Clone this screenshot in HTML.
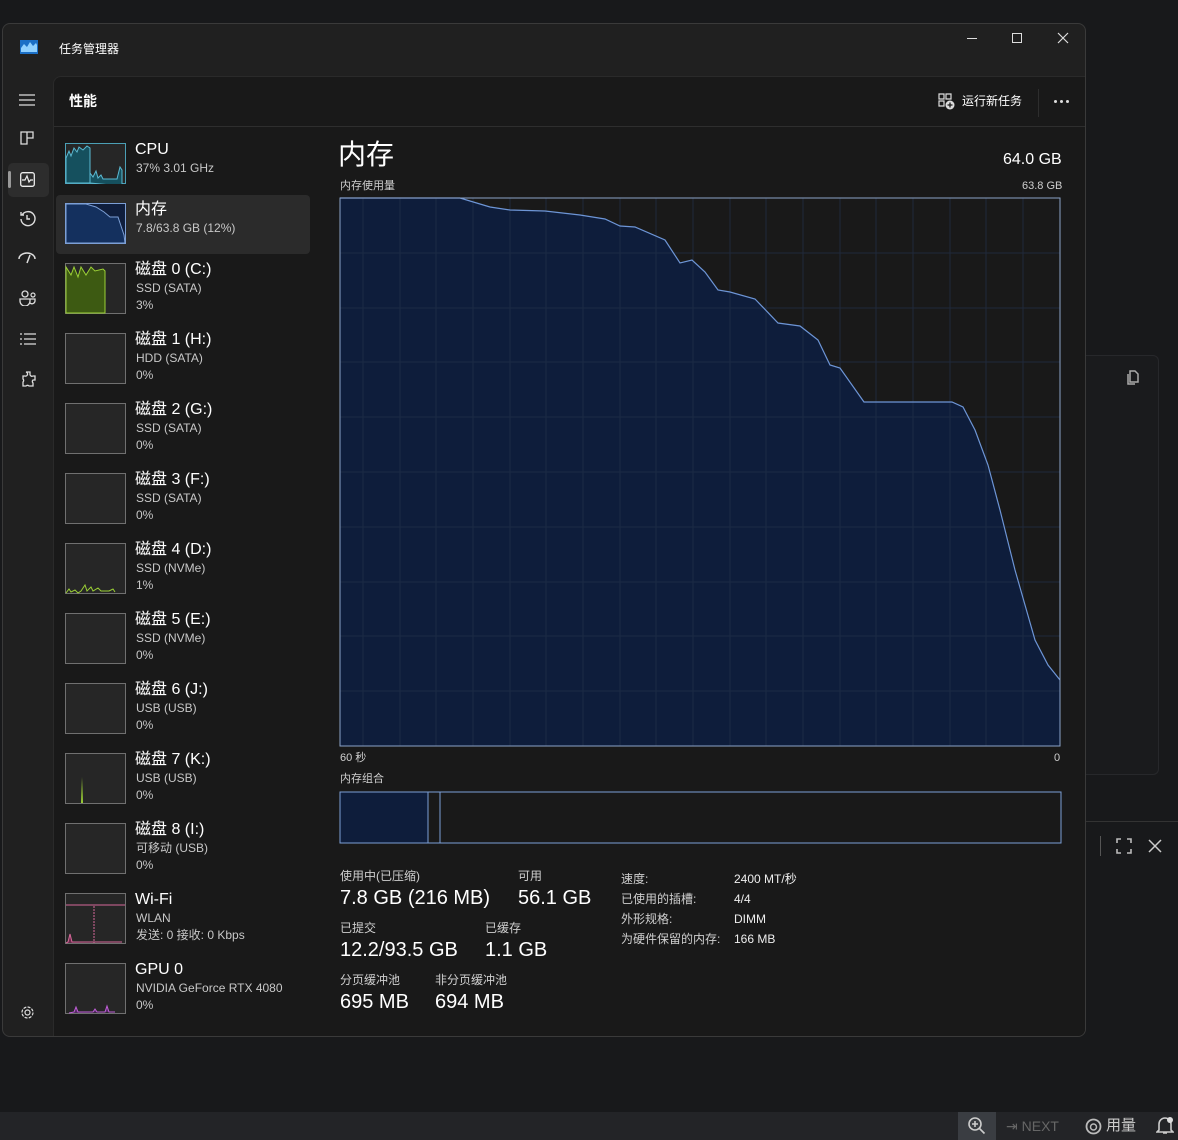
<!DOCTYPE html>
<html><head><meta charset="utf-8">
<style>
*{margin:0;padding:0;box-sizing:border-box}
body{width:1178px;height:1140px;background:#18191b;font-family:"Liberation Sans","Noto Sans CJK SC",sans-serif;color:#fff;position:relative;overflow:hidden}
.a{position:absolute}
.win{left:2px;top:23px;width:1084px;height:1014px;background:#202020;border:1px solid #3a3a3a;border-radius:8px;overflow:hidden}
.panel{left:50px;top:52px;width:1034px;height:962px;background:#191919;border-top-left-radius:8px;border-left:1px solid #2a2a2a;border-top:1px solid #2a2a2a}
.t{font-size:16px;color:#fff;white-space:nowrap;line-height:18px;height:18px}
.s{font-size:12px;color:#c8c8c8;white-space:nowrap;line-height:17px}
.th{border:1px solid #707070;background:#262626;width:61px}
.lbl{font-size:12px;color:#cfcfcf;white-space:nowrap;line-height:14px}
.big{font-size:20px;color:#fff;white-space:nowrap;line-height:24px}
</style></head><body>
<div class="a" style="left:1086px;top:355px;width:73px;height:420px;border:1px solid #27282b;border-left:none;border-radius:0 6px 6px 0;background:#1a1b1d"></div>
<svg class="a" style="left:1126px;top:370px" width="14" height="16" viewBox="0 0 14 16"><path d="M4 1h5l3 3v8H4z M2 4v10h7" fill="none" stroke="#aaa" stroke-width="1.5"/></svg>
<div class="a" style="left:1086px;top:821px;width:92px;height:1px;background:#333"></div>
<div class="a" style="left:1100px;top:836px;width:1px;height:20px;background:#555"></div>
<svg class="a" style="left:1116px;top:838px" width="16" height="16"><path d="M1 5V1h4M11 1h4v4M15 11v4h-4M5 15H1v-4" fill="none" stroke="#bbb" stroke-width="1.6"/></svg>
<svg class="a" style="left:1148px;top:839px" width="14" height="14"><path d="M1 1l12 12M13 1L1 13" stroke="#ccc" stroke-width="1.5"/></svg>
<div class="a" style="left:0;top:1112px;width:1178px;height:28px;background:#232427"></div>
<div class="a" style="left:958px;top:1112px;width:38px;height:28px;background:#3a3d42"></div>
<svg class="a" style="left:967px;top:1116px" width="20" height="20"><circle cx="8" cy="8" r="6" fill="none" stroke="#ccc" stroke-width="1.6"/><path d="M12.5 12.5l5 5M5 8h6M8 5v6" stroke="#ccc" stroke-width="1.6"/></svg>
<div class="a" style="left:1006px;top:1118px;font-size:14px;color:#666">⇥ NEXT</div>
<svg class="a" style="left:1085px;top:1118px" width="17" height="17"><circle cx="8.5" cy="8.5" r="7" fill="none" stroke="#bbb" stroke-width="1.8"/><circle cx="8.5" cy="9" r="3" fill="none" stroke="#bbb" stroke-width="1.5"/></svg>
<div class="a" style="left:1106px;top:1117px;font-size:15px;color:#ccc;line-height:18px">用量</div>
<svg class="a" style="left:1156px;top:1116px" width="18" height="20"><path d="M3 14V8a6 6 0 0112 0v6l2 2H1z M7 17h4" fill="none" stroke="#ccc" stroke-width="1.6"/><circle cx="14" cy="4" r="3" fill="#ddd"/></svg>

<div class="a win">
 <svg class="a" style="left:17px;top:16px" width="18" height="14"><rect width="18" height="14" fill="#1b6fc6"/><path d="M1 12V8l3-4 3 3 3-5 3 4 3-3 1 2v7z" fill="#8fd0ff"/></svg>
 <div class="a" style="left:56px;top:17px;font-size:12px;line-height:16px">任务管理器</div>
 <div class="a" style="left:964px;top:14px;width:10px;height:1px;background:#ddd"></div>
 <div class="a" style="left:1009px;top:9px;width:10px;height:10px;border:1px solid #ddd"></div>
 <svg class="a" style="left:1054px;top:8px" width="12" height="12"><path d="M1 1l10 10M11 1L1 11" stroke="#ddd" stroke-width="1.2"/></svg>
 <svg class="a" style="left:16px;top:70px" width="16" height="12"><path d="M0 1h16M0 6h16M0 11h16" stroke="#ddd" stroke-width="1.2"/></svg>
 <svg class="a" style="left:17px;top:107px" width="14" height="14"><path d="M1 1h6v12H1zM7 1h6v6H7z" fill="none" stroke="#ddd" stroke-width="1.3"/></svg>
 <div class="a" style="left:5px;top:139px;width:41px;height:34px;background:#2d2d2d;border-radius:5px"></div>
 <div class="a" style="left:5px;top:147px;width:3px;height:17px;background:#999;border-radius:2px"></div>
 <svg class="a" style="left:17px;top:148px" width="15" height="15"><rect x=".7" y=".7" width="13.6" height="13.6" rx="2" fill="none" stroke="#eee" stroke-width="1.3"/><path d="M2 8h3l2-4 2 6 1.5-2H13" fill="none" stroke="#eee" stroke-width="1.2"/></svg>
 <svg class="a" style="left:16px;top:186px" width="17" height="17"><path d="M3 5a7 7 0 11-1 4M2 2v3h3" fill="none" stroke="#ddd" stroke-width="1.4"/><path d="M8 5v4h3" fill="none" stroke="#ddd" stroke-width="1.4"/></svg>
 <svg class="a" style="left:15px;top:228px" width="18" height="12"><path d="M1 7a8 6 0 0116 0M9 11l3-8" fill="none" stroke="#ddd" stroke-width="1.5"/></svg>
 <svg class="a" style="left:16px;top:266px" width="18" height="16"><circle cx="6" cy="4" r="3" fill="none" stroke="#ddd" stroke-width="1.3"/><circle cx="14" cy="5" r="2" fill="none" stroke="#ddd" stroke-width="1.2"/><path d="M1 9h10v2a4 4 0 01-10 0zM11 9h5v2a3 3 0 01-5 2" fill="none" stroke="#ddd" stroke-width="1.3"/></svg>
 <svg class="a" style="left:17px;top:309px" width="16" height="12"><path d="M4 1h12M4 6h12M4 11h12M0 1h2M0 6h2M0 11h2" stroke="#ddd" stroke-width="1.3"/></svg>
 <svg class="a" style="left:17px;top:347px" width="16" height="16"><path d="M6 1h4v2a2 2 0 003 2h2v4h-2a2 2 0 000 3v3h-4a2 2 0 00-3 0H3v-4a2 2 0 000-3V5h2a2 2 0 001-4z" fill="none" stroke="#ddd" stroke-width="1.3"/></svg>
 <svg class="a" style="left:17px;top:981px" width="15" height="15"><circle cx="7.5" cy="7.5" r="2.5" fill="none" stroke="#ddd" stroke-width="1.2"/><circle cx="7.5" cy="7.5" r="5.5" fill="none" stroke="#ddd" stroke-width="1.2" stroke-dasharray="3 1.3"/></svg>

 <div class="a panel">
  <div class="a" style="left:15px;top:15px;font-size:14px;font-weight:bold;line-height:18px">性能</div>
  <div class="a" style="left:0;top:49px;width:1034px;height:1px;background:#2e2e2e"></div>
  <svg class="a" style="left:884px;top:16px" width="17" height="17"><path d="M1 1h5v5H1zM8 1h5v5H8zM1 8h5v5H1z" fill="none" stroke="#ddd" stroke-width="1.2"/><circle cx="12" cy="12" r="4.5" fill="#ddd"/><path d="M12 9.5v5M9.5 12h5" stroke="#191919" stroke-width="1.3"/></svg>
  <div class="a" style="left:908px;top:16px;font-size:12px;line-height:16px">运行新任务</div>
  <div class="a" style="left:984px;top:12px;width:1px;height:28px;background:#2e2e2e"></div>
  <div class="a" style="left:1000px;top:23px;width:3px;height:3px;background:#ddd;border-radius:50%"></div>
  <div class="a" style="left:1006px;top:23px;width:3px;height:3px;background:#ddd;border-radius:50%"></div>
  <div class="a" style="left:1012px;top:23px;width:3px;height:3px;background:#ddd;border-radius:50%"></div>
 </div>
 <div class="a" style="left:53px;top:171px;width:254px;height:59px;background:#2b2b2b;border-radius:4px"></div>
</div>

<svg class="a" style="left:65px;top:143px" width="61" height="41"><rect x=".5" y=".5" width="60" height="40" fill="#262626" stroke="#4b9fb5"/><path d="M1 40V15l3-7 2 5 3-8 3 4 2-5 4 3 4-4 3 2v35z" fill="#15505e" stroke="#5bbad3" stroke-width="1"/><path d="M25 40V30l3 4 3-6 2 7 3-3 2 4h14l3-12 2 3v16z" fill="#15505e" stroke="#5bbad3"/></svg>
<div class="a t" style="left:135px;top:141px">CPU</div><div class="a s" style="left:136px;top:160px">37% 3.01 GHz</div>
<svg class="a" style="left:65px;top:203px" width="61" height="41"><rect x=".5" y=".5" width="60" height="40" fill="#0f1e3d" stroke="#7c9fd6"/><path d="M1 1h20l10 3 8 5 6 5 8 0 6 18 1 8H1z" fill="#14305e" stroke="#7c9fd6"/></svg>
<div class="a t" style="left:135px;top:201px">内存</div><div class="a s" style="left:136px;top:220px">7.8/63.8 GB (12%)</div>

<svg class="a" style="left:65px;top:263px" width="61" height="51"><rect x=".5" y=".5" width="60" height="50" fill="#262626" stroke="#707070"/><path d="M1 50V4l5 8 3-8 4 10 3-10 5 8 5-8 4 4 8-2 2 2v42z" fill="#3d5a12" stroke="#9bd035"/></svg>
<div class="a t" style="left:135px;top:261px">磁盘 0 (C:)</div><div class="a s" style="left:136px;top:280px">SSD (SATA)<br>3%</div>
<div class="a th" style="left:65px;top:333px;height:51px"></div>
<div class="a t" style="left:135px;top:331px">磁盘 1 (H:)</div><div class="a s" style="left:136px;top:350px">HDD (SATA)<br>0%</div>
<div class="a th" style="left:65px;top:403px;height:51px"></div>
<div class="a t" style="left:135px;top:401px">磁盘 2 (G:)</div><div class="a s" style="left:136px;top:420px">SSD (SATA)<br>0%</div>
<div class="a th" style="left:65px;top:473px;height:51px"></div>
<div class="a t" style="left:135px;top:471px">磁盘 3 (F:)</div><div class="a s" style="left:136px;top:490px">SSD (SATA)<br>0%</div>
<svg class="a" style="left:65px;top:543px" width="61" height="51"><rect x=".5" y=".5" width="60" height="50" fill="#262626" stroke="#707070"/><path d="M1 50l3-4 2 3 4-2 3 3 3-2 4-6 2 6 4-4 2 4 5-3 3 3 8 0 4-2 2 3" fill="none" stroke="#9bd035"/></svg>
<div class="a t" style="left:135px;top:541px">磁盘 4 (D:)</div><div class="a s" style="left:136px;top:560px">SSD (NVMe)<br>1%</div>
<div class="a th" style="left:65px;top:613px;height:51px"></div>
<div class="a t" style="left:135px;top:611px">磁盘 5 (E:)</div><div class="a s" style="left:136px;top:630px">SSD (NVMe)<br>0%</div>
<div class="a th" style="left:65px;top:683px;height:51px"></div>
<div class="a t" style="left:135px;top:681px">磁盘 6 (J:)</div><div class="a s" style="left:136px;top:700px">USB (USB)<br>0%</div>
<svg class="a" style="left:65px;top:753px" width="61" height="51"><rect x=".5" y=".5" width="60" height="50" fill="#262626" stroke="#707070"/><path d="M16 50l1-26 1 26z" fill="#9bd035"/></svg>
<div class="a t" style="left:135px;top:751px">磁盘 7 (K:)</div><div class="a s" style="left:136px;top:770px">USB (USB)<br>0%</div>
<div class="a th" style="left:65px;top:823px;height:51px"></div>
<div class="a t" style="left:135px;top:821px">磁盘 8 (I:)</div><div class="a s" style="left:136px;top:840px">可移动 (USB)<br>0%</div>
<svg class="a" style="left:65px;top:893px" width="61" height="51"><rect x=".5" y=".5" width="60" height="50" fill="#262626" stroke="#707070"/><path d="M1 12h59" stroke="#d6689a"/><path d="M29 13v37" stroke="#d6689a" stroke-dasharray="2 1"/><path d="M1 50l2-1 2-8 2 8h50" fill="#6a2a4a" stroke="#d6689a"/></svg>
<div class="a t" style="left:135px;top:891px">Wi-Fi</div><div class="a s" style="left:136px;top:910px">WLAN<br>发送: 0 接收: 0 Kbps</div>
<svg class="a" style="left:65px;top:963px" width="61" height="51"><rect x=".5" y=".5" width="60" height="50" fill="#262626" stroke="#707070"/><path d="M4 50l5-1 2-5 2 5 15 0 2-3 2 3 8 0 2-6 2 6 6 0" fill="#5a2a6a" stroke="#c060d8"/></svg>
<div class="a t" style="left:135px;top:961px">GPU 0</div><div class="a s" style="left:136px;top:980px">NVIDIA GeForce RTX 4080<br>0%</div>

<div class="a" style="left:338px;top:137px;font-size:28px;line-height:36px">内存</div>
<div class="a" style="left:1003px;top:150px;font-size:16px;line-height:20px">64.0 GB</div>
<div class="a lbl" style="left:340px;top:179px;font-size:11px">内存使用量</div>
<div class="a lbl" style="left:1022px;top:179px;font-size:11px">63.8 GB</div>
<svg class="a" style="left:339px;top:197px" width="723" height="551" viewBox="339 197 723 551">
<rect x="340" y="198" width="720" height="548" fill="#191919"/>
<path d="M340 198H460L490 207L510 210L545 211L580 215L605 219L620 226L635 227L665 240L680 263L692 260L705 272L718 290L730 292L755 299L778 323L800 326L818 340L830 365L840 368L864 402L952 402L963 407L975 430L988 465L1000 510L1015 570L1035 640L1048 665L1060 680V746H340Z" fill="#0e1d3b"/>
<g stroke="#223049" stroke-width="1" opacity=".7">
<path d="M363 198V746M400 198V746M436 198V746M473 198V746M510 198V746M546 198V746M583 198V746M620 198V746M656 198V746M693 198V746M730 198V746M766 198V746M803 198V746M840 198V746M876 198V746M913 198V746M950 198V746M986 198V746M1023 198V746"/>
<path d="M340 253H1060M340 308H1060M340 362H1060M340 417H1060M340 472H1060M340 527H1060M340 582H1060M340 636H1060M340 691H1060"/>
</g>
<path d="M340 198H460L490 207L510 210L545 211L580 215L605 219L620 226L635 227L665 240L680 263L692 260L705 272L718 290L730 292L755 299L778 323L800 326L818 340L830 365L840 368L864 402L952 402L963 407L975 430L988 465L1000 510L1015 570L1035 640L1048 665L1060 680" fill="none" stroke="#6d95d6" stroke-width="1.2"/>
<rect x="340" y="198" width="720" height="548" fill="none" stroke="#8aa2c8" stroke-width="1"/>
</svg>
<div class="a lbl" style="left:340px;top:751px;font-size:11px">60 秒</div>
<div class="a lbl" style="left:1054px;top:751px;font-size:11px">0</div>
<div class="a lbl" style="left:340px;top:772px;font-size:11px">内存组合</div>
<svg class="a" style="left:339px;top:791px" width="723" height="54"><rect x="1" y="1" width="88" height="51" fill="#0e1d3b"/><rect x="1" y="1" width="721" height="51" fill="none" stroke="#7c9fd6"/><path d="M89 1v51M101 1v51" stroke="#7c9fd6"/></svg>

<div class="a lbl" style="left:340px;top:869px">使用中(已压缩)</div>
<div class="a big" style="left:340px;top:886px">7.8 GB (216 MB)</div>
<div class="a lbl" style="left:518px;top:869px">可用</div>
<div class="a big" style="left:518px;top:886px">56.1 GB</div>
<div class="a lbl" style="left:340px;top:921px">已提交</div>
<div class="a big" style="left:340px;top:938px">12.2/93.5 GB</div>
<div class="a lbl" style="left:485px;top:921px">已缓存</div>
<div class="a big" style="left:485px;top:938px">1.1 GB</div>
<div class="a lbl" style="left:340px;top:973px">分页缓冲池</div>
<div class="a big" style="left:340px;top:990px">695 MB</div>
<div class="a lbl" style="left:435px;top:973px">非分页缓冲池</div>
<div class="a big" style="left:435px;top:990px">694 MB</div>
<div class="a lbl" style="left:621px;top:869px;line-height:20px">速度:<br>已使用的插槽:<br>外形规格:<br>为硬件保留的内存:</div>
<div class="a lbl" style="left:734px;top:869px;line-height:20px;color:#eee">2400 MT/秒<br>4/4<br>DIMM<br>166 MB</div>
</body></html>
